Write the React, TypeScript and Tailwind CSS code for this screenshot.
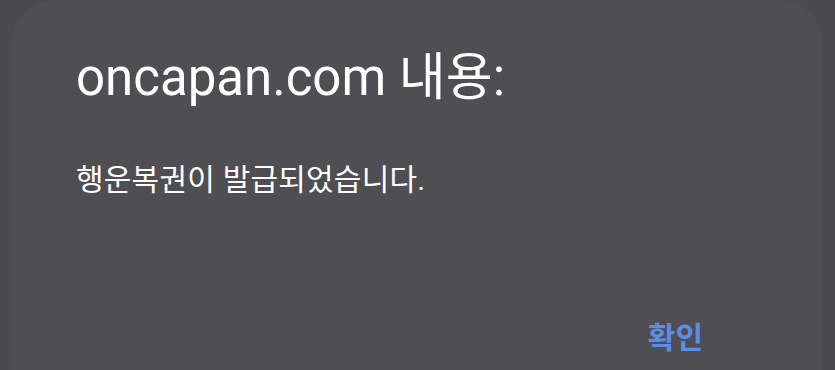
export default function App() {
  return (
    <div className="h-[370px] w-[835px] overflow-hidden bg-[#4b4b4e] font-['Roboto','Noto_Sans_CJK_KR',sans-serif]">
      <div className="mx-[12px] flex h-[420px] flex-col rounded-t-[44px] bg-[#4f4e53] px-[64px] pt-[48px]">
        <h1 className="text-[51px] font-normal leading-[60px] text-white">
          oncapan.com 내용:
        </h1>
        <p className="mt-[52px] text-[30px] leading-[40px] tracking-[0.2px] text-white">
          행운복권이 발급되었습니다.
        </p>
        <div className="mt-[118px] flex justify-end pr-[56px]">
          <button className="text-[30px] font-bold leading-[40px] text-[#5b8ded]">
            확인
          </button>
        </div>
      </div>
    </div>
  );
}
